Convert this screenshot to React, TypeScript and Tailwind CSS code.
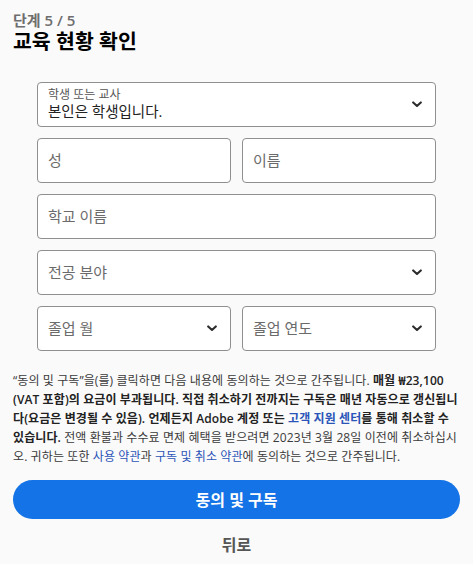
import React from "react";

const Chevron = () => (
  <svg width="10" height="7" viewBox="0 0 10 7" className="shrink-0">
    <path d="M1.2 1.4 L5 5 L8.8 1.4" fill="none" stroke="#2c2c2c" strokeWidth="2.1" strokeLinecap="round" strokeLinejoin="round" />
  </svg>
);

const Box = ({ children, className = "" }: { children: React.ReactNode; className?: string }) => (
  <div className={`h-[45px] bg-white border border-[#8f8f8f] rounded-[4px] flex items-center pl-[10px] pr-[13px] ${className}`}>{children}</div>
);

const Placeholder = ({ text, select }: { text: string; select?: boolean }) => (
  <>
    <span className="flex-1 text-[15px] text-[#6b6b6b]">{text}</span>
    {select && <Chevron />}
  </>
);

export default function App() {
  return (
    <div
      className="w-[473px] h-[564px] bg-[#fafafa] overflow-hidden"
      style={{ fontFamily: '"Open Sans", "Noto Sans CJK KR", sans-serif' }}
    >
      <div className="px-[13px] pt-[10px]">
        <div className="text-[15px] leading-[20px] font-semibold text-[#6e6e6e]">단계 5 / 5</div>
        <div className="text-[20.5px] leading-[22px] font-bold text-black">교육 현황 확인</div>
      </div>

      <div className="w-[399px] mx-auto mt-[30px] flex flex-col gap-[11px]">
        <Box>
          <div className="flex-1 flex flex-col">
            <span className="text-[12px] leading-[14px] text-[#555]">학생 또는 교사</span>
            <span className="text-[14.5px] leading-[19px] text-[#222]">본인은 학생입니다.</span>
          </div>
          <Chevron />
        </Box>
        <div className="flex gap-[11px]">
          <Box className="flex-1"><Placeholder text="성" /></Box>
          <Box className="flex-1"><Placeholder text="이름" /></Box>
        </div>
        <Box><Placeholder text="학교 이름" /></Box>
        <Box><Placeholder text="전공 분야" select /></Box>
        <div className="flex gap-[11px]">
          <Box className="flex-1"><Placeholder text="졸업 월" select /></Box>
          <Box className="flex-1"><Placeholder text="졸업 연도" select /></Box>
        </div>
      </div>

      <p className="px-[13px] mt-[20px] text-[12px] tracking-[0.1px] leading-[19px] text-[#3a3a3a]">
        “동의 및 구독”을(를) 클릭하면 다음 내용에 동의하는 것으로 간주됩니다.{" "}
        <span className="font-semibold text-[#222]">
          매월 ₩23,100 (VAT 포함)의 요금이 부과됩니다. 직접 취소하기 전까지는 구독은 매년 자동으로 갱신됩니다(요금은 변경될 수 있음). 언제든지 Adobe 계정 또는{" "}
          <span className="text-[#2b54b8]">고객 지원 센터</span>를 통해 취소할 수 있습니다.
        </span>{" "}
        전액 환불과 수수료 면제 혜택을 받으려면 2023년 3월 28일 이전에 취소하십시오. 귀하는 또한{" "}
        <span className="text-[#2b54b8]">사용 약관</span>과{" "}
        <span className="text-[#2b54b8]">구독 및 취소 약관</span>에 동의하는 것으로 간주됩니다.
      </p>

      <div className="px-[13px] mt-[14px]">
        <button className="w-full h-[39px] rounded-full bg-[#1473e6] text-white text-[16px] font-bold flex items-center justify-center">
          동의 및 구독
        </button>
        <div className="mt-[14px] text-center text-[16px] font-bold text-[#555]">뒤로</div>
      </div>
    </div>
  );
}
